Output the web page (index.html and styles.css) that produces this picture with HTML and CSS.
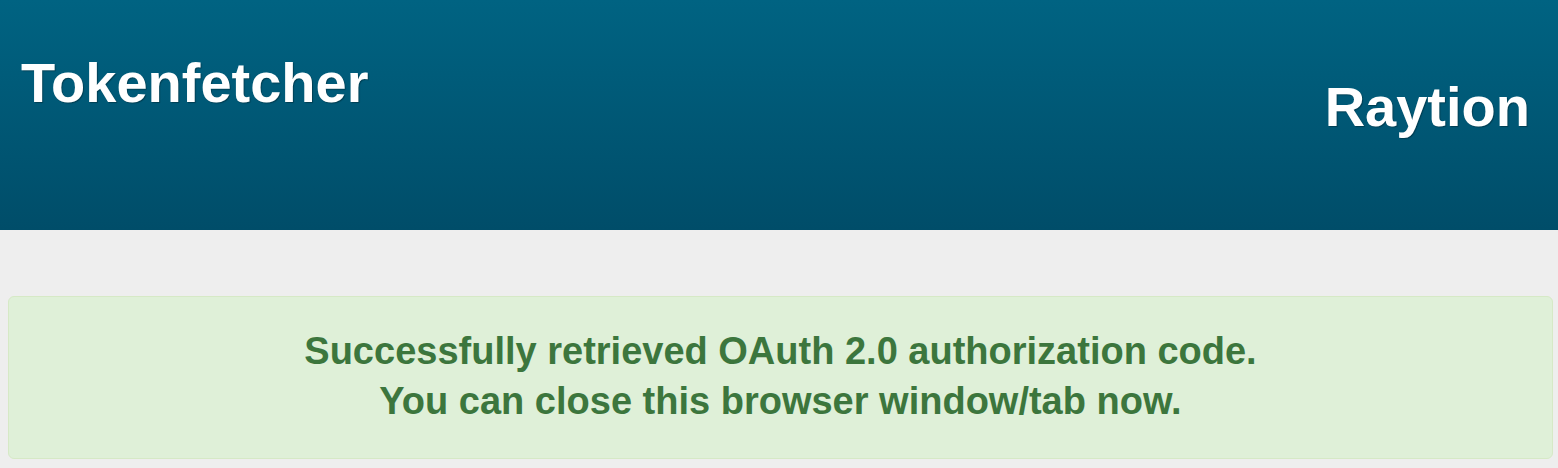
FILE: index.html
```html
<!DOCTYPE html>
<html lang="en">
<head>
<meta charset="utf-8">
<title>Tokenfetcher</title>
<link rel="stylesheet" href="styles.css">
</head>
<body>
<header class="header">
  <div class="brand">Tokenfetcher</div>
  <div class="company">Raytion</div>
</header>
<main class="content">
  <div class="alert">
    <p class="message">Successfully retrieved OAuth 2.0 authorization code.<br>You can close this browser window/tab now.</p>
  </div>
</main>
</body>
</html>
```

FILE: styles.css
```css
* { box-sizing: border-box; }
html, body { margin: 0; padding: 0; }
body {
  background: #eeeeee;
  font-family: "Liberation Sans", Arial, sans-serif;
}
.header {
  height: 230px;
  background: linear-gradient(to bottom, #006382, #004d69);
  color: #ffffff;
  display: flex;
  justify-content: space-between;
  align-items: flex-start;
  padding: 0 28px 0 21px;
  font-weight: bold;
  font-size: 56px;
  text-shadow: 1px 1px 1px rgba(0, 0, 0, 0.3);
}
.brand {
  line-height: 64px;
  margin-top: 51px;
}
.company {
  line-height: 64px;
  margin-top: 75px;
}
.content {
  padding: 66px 5px 0 8px;
}
.alert {
  background: #dff0d8;
  border: 1px solid #d6e9c6;
  border-radius: 6px;
  color: #3c763d;
  height: 163px;
  padding: 29px 15px 0;
}
.message {
  margin: 0;
  text-align: center;
  font-weight: bold;
  font-size: 38px;
  line-height: 50px;
}
```
